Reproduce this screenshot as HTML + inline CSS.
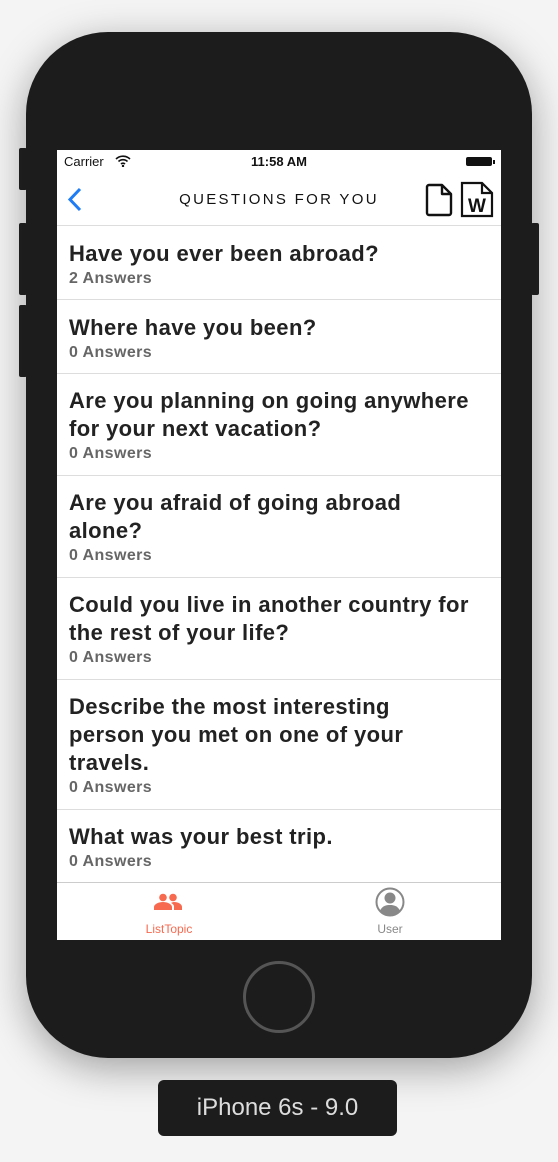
<!DOCTYPE html>
<html><head><style>
body{margin:0;width:558px;height:1162px;background:#f4f4f4;position:relative;overflow:hidden;font-family:"Liberation Sans",sans-serif}
.phone{position:absolute;left:26px;top:32px;width:506px;height:1026px;background:#1c1c1c;border-radius:82px;box-shadow:0 10px 40px rgba(0,0,0,.35)}
.btn{position:absolute;background:#222;border-radius:2px}
.screen{position:absolute;left:57px;top:150px;width:444px;height:790px;background:#fff;overflow:hidden}
.row{position:absolute;left:0;width:444px;border-top:1px solid #ddd}
.t{position:absolute;left:12px;font-size:22px;letter-spacing:.4px;font-weight:bold;color:#222;line-height:28px;width:440px;white-space:nowrap}
.a{position:absolute;left:12px;font-size:16px;letter-spacing:.4px;font-weight:bold;color:#666}
</style></head><body>
<div class="btn" style="left:19px;top:148px;width:8px;height:42px"></div>
<div class="btn" style="left:19px;top:223px;width:8px;height:72px"></div>
<div class="btn" style="left:19px;top:305px;width:8px;height:72px"></div>
<div class="btn" style="left:531px;top:223px;width:8px;height:72px"></div>
<div class="phone"></div>
<div class="screen">
<div style="position:absolute;left:7px;top:4px;font-size:13px;color:#111">Carrier</div>
<svg style="position:absolute;left:58px;top:5px" width="16" height="12" viewBox="0 0 16 12"><path d="M1 4a10 10 0 0 1 14 0M3.5 6.5a6.5 6.5 0 0 1 9 0M6 9a3 3 0 0 1 4 0" stroke="#111" stroke-width="1.6" fill="none"/><circle cx="8" cy="11" r="1.2" fill="#111"/></svg>
<div style="position:absolute;left:0;width:444px;text-align:center;top:4px;font-size:13px;font-weight:bold;color:#111">11:58 AM</div>
<div style="position:absolute;left:409px;top:7px;width:26px;height:9px;background:#111;border-radius:2px"></div>
<div style="position:absolute;left:436px;top:10px;width:2px;height:4px;background:#111"></div>
<svg style="position:absolute;left:10px;top:37px" width="16" height="26" viewBox="0 0 16 26"><path d="M13 2L3 12.5 13 23" stroke="#1e7cf5" stroke-width="3" fill="none"/></svg>
<div style="position:absolute;left:0;width:444px;text-align:center;top:41px;font-size:15px;letter-spacing:2.3px;color:#111">QUESTIONS FOR YOU</div>
<svg style="position:absolute;left:367px;top:33px" width="30" height="34" viewBox="0 0 30 34"><path d="M3 4a2 2 0 0 1 2-2h13l9 9v19a2 2 0 0 1-2 2H5a2 2 0 0 1-2-2zM18 2v9h9" stroke="#111" stroke-width="2.4" fill="none" stroke-linejoin="round"/></svg>
<svg style="position:absolute;left:403px;top:31px" width="34" height="37" viewBox="0 0 34 37"><path d="M2 2h20l10 10v23H2zM22 2v10h10" stroke="#111" stroke-width="2.2" fill="none"/><text x="17" y="31" font-size="19" font-family="Liberation Sans" font-weight="bold" text-anchor="middle" fill="#111">W</text></svg>
<div class="row" style="top:75px;height:74px"><div class="t" style="top:14px">Have you ever been abroad?</div><div class="a" style="top:44px">2 Answers</div></div>
<div class="row" style="top:149px;height:73px"><div class="t" style="top:14px">Where have you been?</div><div class="a" style="top:44px">0 Answers</div></div>
<div class="row" style="top:223px;height:101px"><div class="t" style="top:13px">Are you planning on going anywhere<br>for your next vacation?</div><div class="a" style="top:71px">0 Answers</div></div>
<div class="row" style="top:325px;height:101px"><div class="t" style="top:13px">Are you afraid of going abroad<br>alone?</div><div class="a" style="top:71px">0 Answers</div></div>
<div class="row" style="top:427px;height:101px"><div class="t" style="top:13px">Could you live in another country for<br>the rest of your life?</div><div class="a" style="top:71px">0 Answers</div></div>
<div class="row" style="top:529px;height:129px"><div class="t" style="top:13px">Describe the most interesting<br>person you met on one of your<br>travels.</div><div class="a" style="top:99px">0 Answers</div></div>
<div class="row" style="top:659px;height:73px"><div class="t" style="top:13px">What was your best trip.</div><div class="a" style="top:43px">0 Answers</div></div>
<div class="row" style="top:732px;height:58px;border-top:1px solid #ccc"></div>
<svg style="position:absolute;left:97px;top:743px" width="28" height="18" viewBox="0 0 28 18"><circle cx="9" cy="4.5" r="3.8" fill="#f76a4f"/><circle cx="19" cy="4.5" r="3.8" fill="#f76a4f"/><path d="M0 17v-3c0-3 5-5 9-5s9 2 9 5v3zM17 10c2-1 3-1 3-1 4 0 8 2 8 5v3h-8v-3c0-2-1-3-3-4z" fill="#f76a4f"/></svg>
<div style="position:absolute;left:68px;top:772px;width:88px;text-align:center;font-size:12px;color:#f76a4f">ListTopic</div>
<svg style="position:absolute;left:318px;top:737px" width="30" height="30" viewBox="0 0 30 30"><circle cx="15" cy="15" r="13.5" stroke="#888" stroke-width="2" fill="none"/><circle cx="15" cy="11" r="5.5" fill="#888"/><path d="M5 24c2-5 6-6 10-6s8 1 10 6a13 13 0 0 1-20 0z" fill="#888"/></svg>
<div style="position:absolute;left:290px;top:772px;width:86px;text-align:center;font-size:12px;color:#888">User</div>
</div>
<div style="position:absolute;left:243px;top:961px;width:66px;height:66px;border:3px solid #555;border-radius:50%"></div>
<div style="position:absolute;left:158px;top:1080px;width:239px;height:56px;background:#1c1c1c;border-radius:6px;color:#ddd;font-size:24px;text-align:center;line-height:56px">iPhone 6s - 9.0</div>
</body></html>
